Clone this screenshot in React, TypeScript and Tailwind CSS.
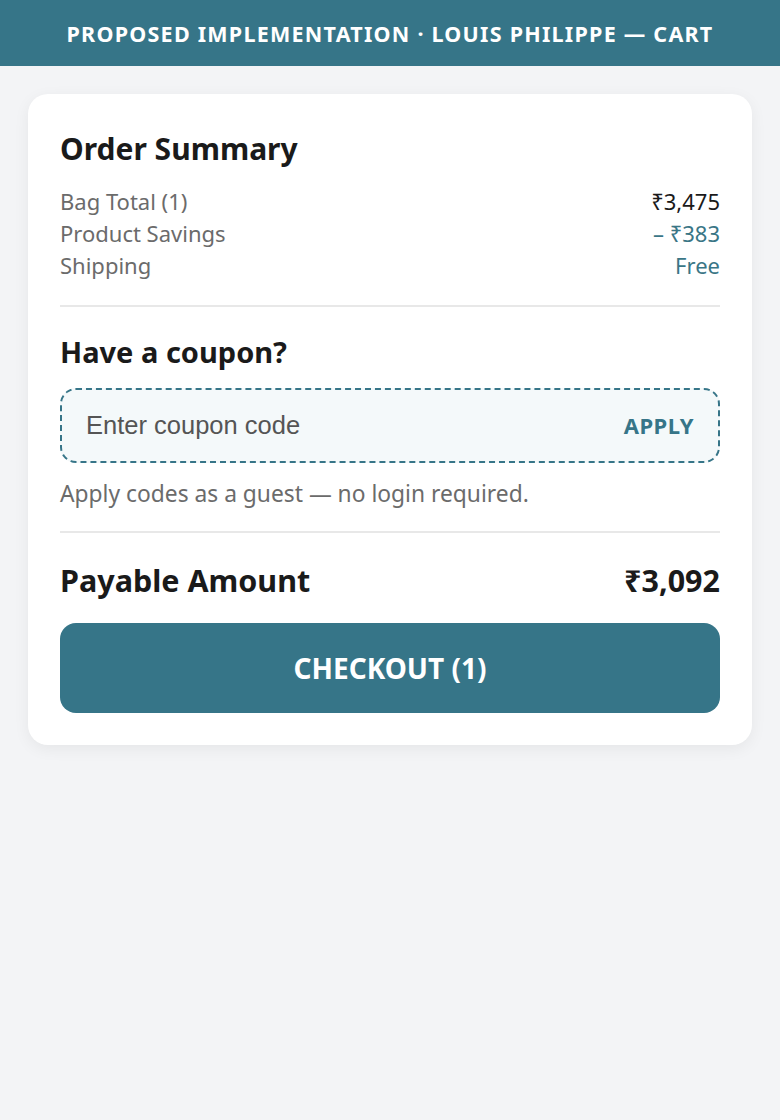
import React, { useState } from 'react';

const rows = [
  { label: 'Bag Total (1)', value: '₹3,475', accent: false },
  { label: 'Product Savings', value: '– ₹383', accent: true },
  { label: 'Shipping', value: 'Free', accent: true },
];

const App: React.FC = () => {
  const [code, setCode] = useState('');

  return (
    <div className="min-h-[1120px] bg-[#f3f4f6] font-['Noto_Sans',sans-serif] text-[#1a1a1a]">
      <div className="h-[66px] bg-[#367588] flex items-center justify-center pt-[3px]">
        <h1 className="text-white text-[21.5px] font-bold tracking-[0.058em]">
          PROPOSED IMPLEMENTATION · LOUIS PHILIPPE — CART
        </h1>
      </div>

      <div className="px-7 pt-7">
        <div className="bg-white rounded-[20px] shadow-[0_4px_16px_rgba(0,0,0,0.06)] p-8">
          <h2 className="text-[30px] font-bold leading-[46px]">Order Summary</h2>
          <div className="mt-[13px] text-[22px] leading-8">
            {rows.map(r => (
              <div key={r.label} className="flex justify-between">
                <span className="text-[#6b6b6b]">{r.label}</span>
                <span className={r.accent ? 'text-[#3a7686]' : 'text-[#1a1a1a]'}>{r.value}</span>
              </div>
            ))}
          </div>

          <div className="h-[2px] bg-[#e8e8e8] mt-[24px]" />

          <h2 className="text-[29px] font-bold leading-[46px] mt-[22px]">Have a coupon?</h2>
          <div className="mt-[13px] h-[75px] rounded-2xl border-2 border-dashed border-[#367588] bg-[#f4f9fa] flex items-center pl-6 pr-6">
            <input
              value={code}
              onChange={e => setCode(e.target.value)}
              placeholder="Enter coupon code"
              className="flex-1 bg-transparent outline-none text-[25.5px] font-['Liberation_Sans',sans-serif] text-[#333] placeholder:text-[#555]"
            />
            <button className="text-[22px] font-bold text-[#367588] tracking-[0.02em]">APPLY</button>
          </div>
          <p className="mt-[15px] text-[22.8px] leading-8 text-[#6b6b6b]">Apply codes as a guest — no login required.</p>

          <div className="h-[2px] bg-[#e8e8e8] mt-[21px]" />

          <div className="flex justify-between items-center mt-[24px] text-[30.5px] font-bold leading-[46px]">
            <span>Payable Amount</span>
            <span>₹3,092</span>
          </div>

          <button className="mt-[20px] w-full h-[90px] rounded-2xl bg-[#367588] text-white text-[28px] font-bold">
            CHECKOUT (1)
          </button>
        </div>
      </div>
    </div>
  );
};

export default App;
